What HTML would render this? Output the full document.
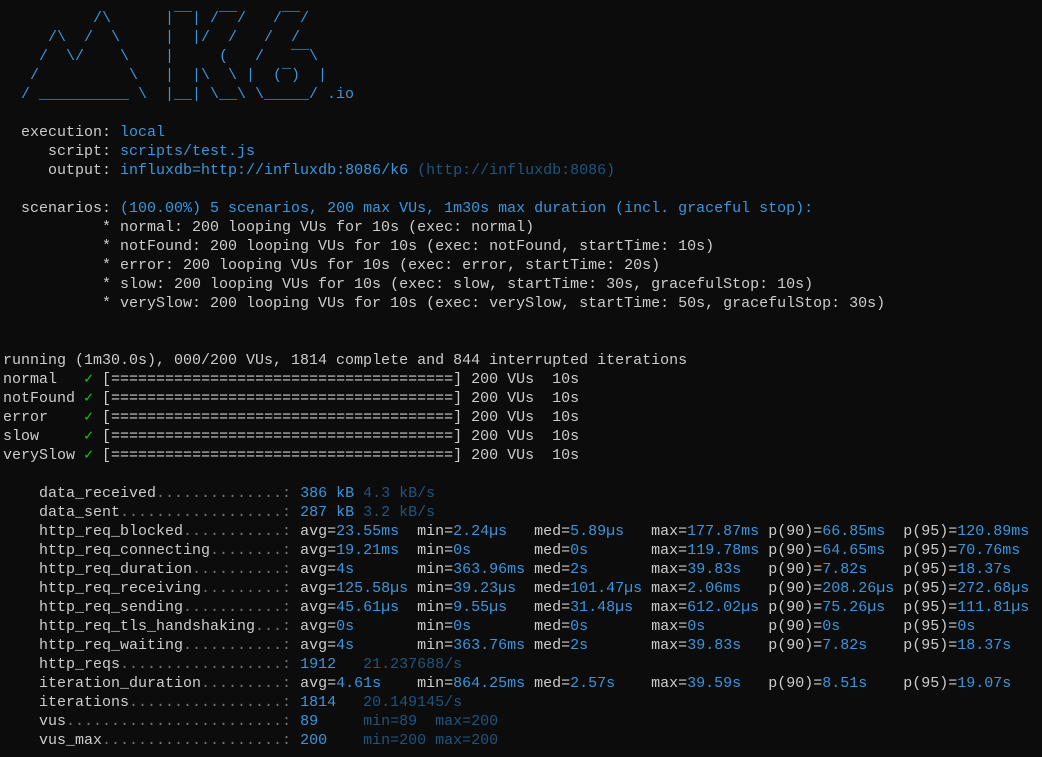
<!DOCTYPE html>
<html><head><meta charset="utf-8">
<style>
html,body{margin:0;padding:0;background:#0c0c0c;width:1042px;height:757px;overflow:hidden}
pre{margin:0;position:absolute;left:3px;top:9px;font-family:"Liberation Mono","DejaVu Sans Mono",monospace;font-size:15px;line-height:19px;color:#cccccc;white-space:pre}
b{font-weight:normal;color:#3a96dd}
i{font-style:normal;color:#1f5580}
u{text-decoration:none;color:#767676}
s{text-decoration:none;color:#16c60c}
</style></head><body>
<pre><b>          /\      |‾‾| /‾‾/   /‾‾/   
     /\  /  \     |  |/  /   /  /    
    /  \/    \    |     (   /   ‾‾\  
   /          \   |  |\  \ |  (‾)  | 
  / __________ \  |__| \__\ \_____/ .io</b>

  execution: <b>local</b>
     script: <b>scripts/test.js</b>
     output: <b>influxdb=http://influxdb:8086/k6</b> <i>(http://influxdb:8086)</i>

  scenarios: <b>(100.00%) 5 scenarios, 200 max VUs, 1m30s max duration (incl. graceful stop):</b>
           * normal: 200 looping VUs for 10s (exec: normal)
           * notFound: 200 looping VUs for 10s (exec: notFound, startTime: 10s)
           * error: 200 looping VUs for 10s (exec: error, startTime: 20s)
           * slow: 200 looping VUs for 10s (exec: slow, startTime: 30s, gracefulStop: 10s)
           * verySlow: 200 looping VUs for 10s (exec: verySlow, startTime: 50s, gracefulStop: 30s)


running (1m30.0s), 000/200 VUs, 1814 complete and 844 interrupted iterations
normal   <s>✓</s> [======================================] 200 VUs  10s
notFound <s>✓</s> [======================================] 200 VUs  10s
error    <s>✓</s> [======================================] 200 VUs  10s
slow     <s>✓</s> [======================================] 200 VUs  10s
verySlow <s>✓</s> [======================================] 200 VUs  10s

    data_received<u>..............:</u> <b>386 kB</b> <i>4.3 kB/s</i>
    data_sent<u>..................:</u> <b>287 kB</b> <i>3.2 kB/s</i>
    http_req_blocked<u>...........:</u> avg=<b>23.55ms</b>  min=<b>2.24µs</b>   med=<b>5.89µs</b>   max=<b>177.87ms</b> p(90)=<b>66.85ms</b>  p(95)=<b>120.89ms</b>
    http_req_connecting<u>........:</u> avg=<b>19.21ms</b>  min=<b>0s</b>       med=<b>0s</b>       max=<b>119.78ms</b> p(90)=<b>64.65ms</b>  p(95)=<b>70.76ms</b>
    http_req_duration<u>..........:</u> avg=<b>4s</b>       min=<b>363.96ms</b> med=<b>2s</b>       max=<b>39.83s</b>   p(90)=<b>7.82s</b>    p(95)=<b>18.37s</b>
    http_req_receiving<u>.........:</u> avg=<b>125.58µs</b> min=<b>39.23µs</b>  med=<b>101.47µs</b> max=<b>2.06ms</b>   p(90)=<b>208.26µs</b> p(95)=<b>272.68µs</b>
    http_req_sending<u>...........:</u> avg=<b>45.61µs</b>  min=<b>9.55µs</b>   med=<b>31.48µs</b>  max=<b>612.02µs</b> p(90)=<b>75.26µs</b>  p(95)=<b>111.81µs</b>
    http_req_tls_handshaking<u>...:</u> avg=<b>0s</b>       min=<b>0s</b>       med=<b>0s</b>       max=<b>0s</b>       p(90)=<b>0s</b>       p(95)=<b>0s</b>
    http_req_waiting<u>...........:</u> avg=<b>4s</b>       min=<b>363.76ms</b> med=<b>2s</b>       max=<b>39.83s</b>   p(90)=<b>7.82s</b>    p(95)=<b>18.37s</b>
    http_reqs<u>..................:</u> <b>1912</b>   <i>21.237688/s</i>
    iteration_duration<u>.........:</u> avg=<b>4.61s</b>    min=<b>864.25ms</b> med=<b>2.57s</b>    max=<b>39.59s</b>   p(90)=<b>8.51s</b>    p(95)=<b>19.07s</b>
    iterations<u>.................:</u> <b>1814</b>   <i>20.149145/s</i>
    vus<u>........................:</u> <b>89</b>     <i>min=89  max=200</i>
    vus_max<u>....................:</u> <b>200</b>    <i>min=200 max=200</i></pre>
</body></html>
